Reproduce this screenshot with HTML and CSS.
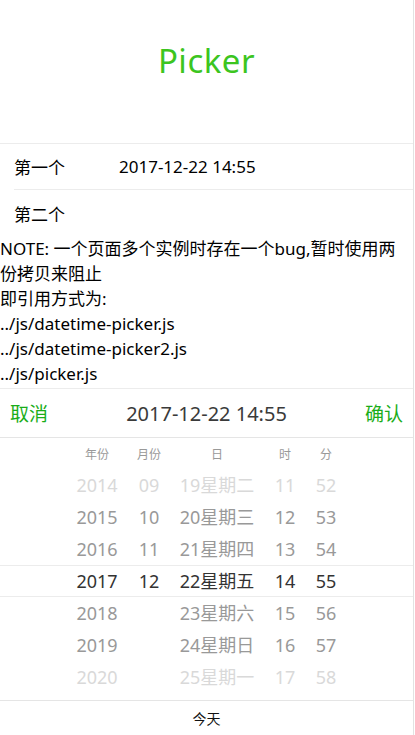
FILE: index.html
```html
<!DOCTYPE html>
<html lang="zh-CN">
<head>
<meta charset="utf-8">
<title>Picker</title>
<link rel="stylesheet" href="styles.css">
</head>
<body>
<div class="page">
  <header class="hd">
    <h1 class="title">Picker</h1>
  </header>
  <div class="cells">
    <div class="cell cell-first">
      <span class="cell-label">第一个</span>
      <span class="cell-value">2017-12-22 14:55</span>
    </div>
    <div class="cell cell-second">
      <span class="cell-label">第二个</span>
    </div>
  </div>
  <p class="note">NOTE: 一个页面多个实例时存在一个bug,暂时使用两<br>份拷贝来阻止<br>即引用方式为:<br>../js/datetime-picker.js<br>../js/datetime-picker2.js<br>../js/picker.js</p>
  <div class="picker">
    <div class="picker-hd">
      <span class="picker-action">取消</span>
      <span class="picker-title">2017-12-22 14:55</span>
      <span class="picker-action">确认</span>
    </div>
    <div class="wheel-grid picker-labels">
      <span>年份</span><span>月份</span><span>日</span><span>时</span><span>分</span>
    </div>
    <div class="picker-body">
      <div class="wheel-grid wheel-row edge"><span>2014</span><span>09</span><span>19星期二</span><span>11</span><span>52</span></div>
      <div class="wheel-grid wheel-row"><span>2015</span><span>10</span><span>20星期三</span><span>12</span><span>53</span></div>
      <div class="wheel-grid wheel-row"><span>2016</span><span>11</span><span>21星期四</span><span>13</span><span>54</span></div>
      <div class="wheel-grid wheel-row selected"><span>2017</span><span>12</span><span>22星期五</span><span>14</span><span>55</span></div>
      <div class="wheel-grid wheel-row"><span>2018</span><span></span><span>23星期六</span><span>15</span><span>56</span></div>
      <div class="wheel-grid wheel-row"><span>2019</span><span></span><span>24星期日</span><span>16</span><span>57</span></div>
      <div class="wheel-grid wheel-row edge"><span>2020</span><span></span><span>25星期一</span><span>17</span><span>58</span></div>
    </div>
    <div class="picker-ft">今天</div>
  </div>
</div>
</body>
</html>
```
FILE: styles.css
```css
html, body {
  margin: 0;
  padding: 0;
  background: #fff;
}

body {
  font-family: "Noto Sans", "Noto Sans CJK SC", sans-serif;
  color: #000;
}

.page {
  width: 413px;
  min-height: 735px;
  border-right: 1px solid #e2e2e2;
}

.hd {
  height: 143px;
  box-sizing: content-box;
  padding: 0;
  border-bottom: 1px solid #ececec;
}

.title {
  margin: 0;
  padding-top: 41px;
  font-size: 33px;
  line-height: 40px;
  font-weight: normal;
  text-align: center;
  letter-spacing: 0.5px;
  color: #3cc51f;
}

.cells {
  display: flex;
  flex-direction: column;
}

.cell {
  display: flex;
  align-items: center;
  margin-left: 14px;
  font-size: 17px;
}

.cell-first {
  height: 45px;
  border-bottom: 1px solid #ececec;
}

.cell-second {
  height: 46px;
}

.cell-label {
  width: 105px;
}

.note {
  margin: 0 0 2px;
  font-size: 17px;
  line-height: 25px;
}

.picker-hd {
  display: flex;
  justify-content: space-between;
  align-items: center;
  height: 48px;
  padding: 0 10px;
  border-top: 1px solid #ececec;
  border-bottom: 1px solid #e5e5e5;
}

.picker-action {
  font-size: 19px;
  color: #1aad19;
}

.picker-title {
  font-size: 20px;
  color: #3a3a3a;
}

.wheel-grid {
  display: grid;
  grid-template-columns: 54px 50px 86px 50px 32px;
  padding-left: 70px;
  align-items: center;
  text-align: center;
  white-space: nowrap;
}

.picker-labels {
  height: 31px;
  font-size: 12px;
  color: #999;
}

.picker-body {
  padding-bottom: 7px;
}

.wheel-row {
  height: 32px;
  box-sizing: border-box;
  font-size: 18px;
  line-height: 30px;
  color: #999;
}

.wheel-row.edge {
  color: #d9d9d9;
}

.wheel-row.selected {
  color: #333;
  border-top: 1px solid #ececec;
  border-bottom: 1px solid #ececec;
}

.picker-ft {
  height: 34px;
  border-top: 1px solid #e5e5e5;
  display: flex;
  justify-content: center;
  align-items: center;
  font-size: 14px;
  color: #111;
}
```
